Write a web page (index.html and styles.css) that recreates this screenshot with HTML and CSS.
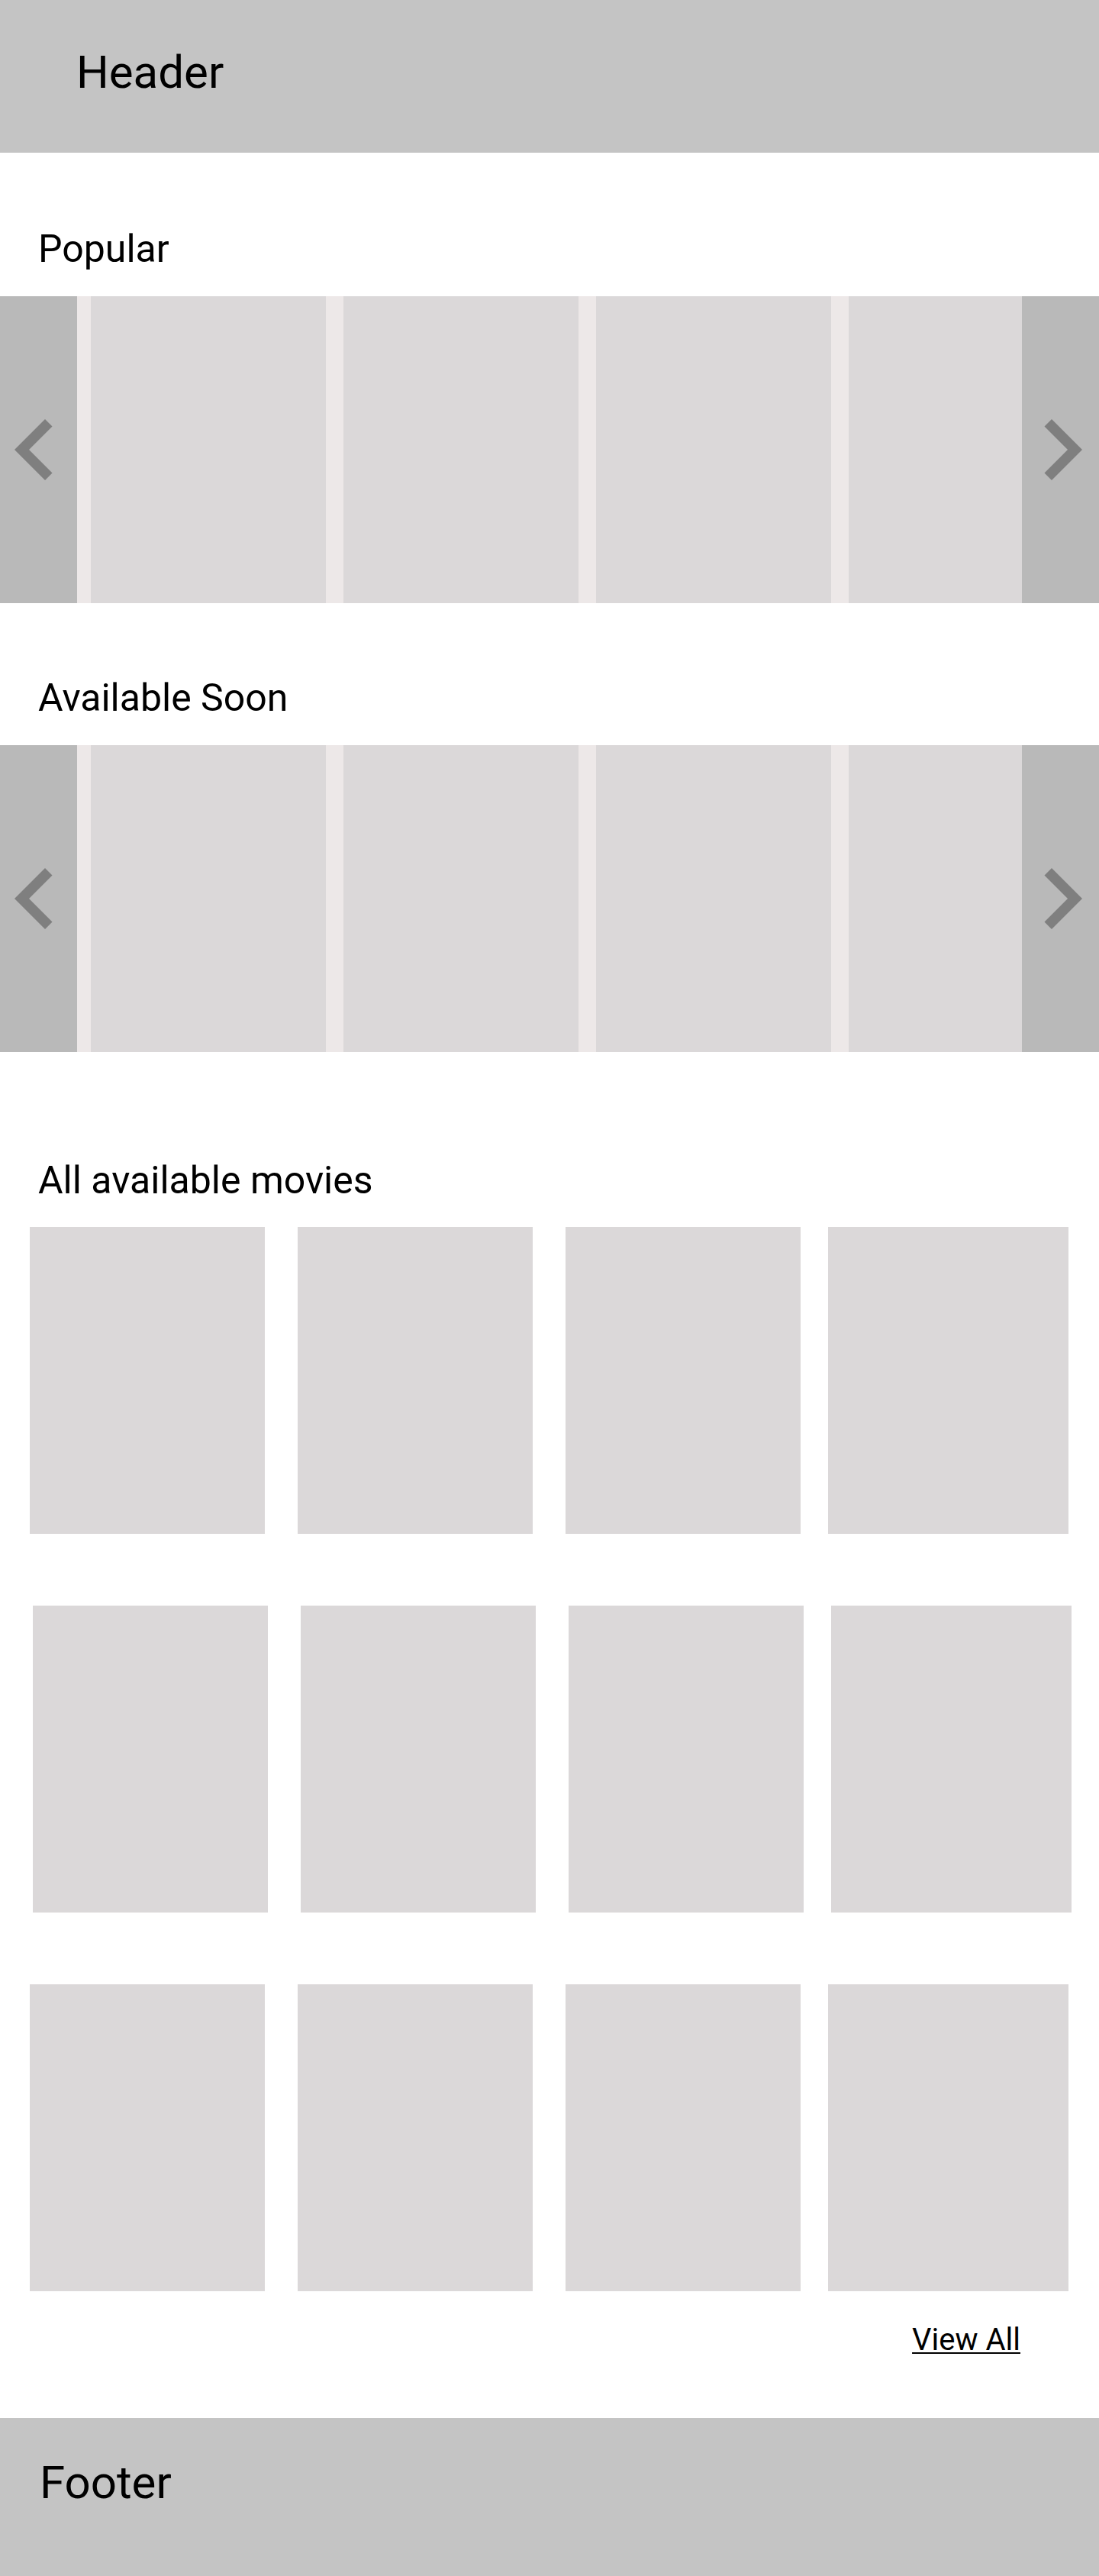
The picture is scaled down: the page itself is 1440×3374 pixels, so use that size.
FILE: index.html
```html
<!DOCTYPE html>
<html lang="en">
<head>
<meta charset="utf-8">
<title>Movies</title>
<link rel="stylesheet" href="styles.css">
</head>
<body>
<header class="site-header">
  <h1 class="site-title">Header</h1>
</header>

<main class="page">
  <section class="shelf shelf--first">
    <h2 class="section-title">Popular</h2>
    <div class="carousel">
      <button class="carousel-nav carousel-nav--prev" type="button" aria-label="Previous">
        <svg class="chevron" width="50" height="80" viewBox="0 0 50 80"><polygon points="40,0 49.5,9.4 19,40 49.5,70.6 40,80 0,40"/></svg>
      </button>
      <div class="carousel-track">
        <div class="poster"></div>
        <div class="poster"></div>
        <div class="poster"></div>
        <div class="poster"></div>
        <div class="poster"></div>
      </div>
      <button class="carousel-nav carousel-nav--next" type="button" aria-label="Next">
        <svg class="chevron" width="50" height="80" viewBox="0 0 50 80"><polygon points="10,0 50,40 10,80 0.5,70.6 31,40 0.5,9.4"/></svg>
      </button>
    </div>
  </section>

  <section class="shelf">
    <h2 class="section-title">Available Soon</h2>
    <div class="carousel">
      <button class="carousel-nav carousel-nav--prev" type="button" aria-label="Previous">
        <svg class="chevron" width="50" height="80" viewBox="0 0 50 80"><polygon points="40,0 49.5,9.4 19,40 49.5,70.6 40,80 0,40"/></svg>
      </button>
      <div class="carousel-track">
        <div class="poster"></div>
        <div class="poster"></div>
        <div class="poster"></div>
        <div class="poster"></div>
        <div class="poster"></div>
      </div>
      <button class="carousel-nav carousel-nav--next" type="button" aria-label="Next">
        <svg class="chevron" width="50" height="80" viewBox="0 0 50 80"><polygon points="10,0 50,40 10,80 0.5,70.6 31,40 0.5,9.4"/></svg>
      </button>
    </div>
  </section>

  <section class="catalog">
    <h2 class="section-title section-title--catalog">All available movies</h2>
    <div class="catalog-grid">
      <div class="catalog-row">
        <div class="tile"></div>
        <div class="tile"></div>
        <div class="tile"></div>
        <div class="tile tile--wide"></div>
      </div>
      <div class="catalog-row catalog-row--offset">
        <div class="tile"></div>
        <div class="tile"></div>
        <div class="tile"></div>
        <div class="tile tile--wide"></div>
      </div>
      <div class="catalog-row">
        <div class="tile"></div>
        <div class="tile"></div>
        <div class="tile"></div>
        <div class="tile tile--wide"></div>
      </div>
    </div>
    <div class="catalog-more">
      <a class="view-all" href="#">View All</a>
    </div>
  </section>
</main>

<footer class="site-footer">
  <p class="footer-title">Footer</p>
</footer>
</body>
</html>
```

FILE: styles.css
```css
* {
  box-sizing: border-box;
}

html, body {
  margin: 0;
  padding: 0;
}

body {
  font-family: Roboto, "Liberation Sans", Arial, sans-serif;
  color: #000;
  background: #fff;
}

/* Header */
.site-header {
  height: 200px;
  background: #c4c4c4;
  padding: 60px 0 0 100px;
}

.site-title {
  margin: 0;
  font-size: 60px;
  font-weight: 400;
  line-height: 70px;
}

/* Sections */
.shelf {
  padding-top: 95px;
}

.shelf--first {
  padding-top: 97px;
}

.section-title {
  margin: 0 0 33px 50px;
  font-size: 50px;
  font-weight: 400;
  line-height: 58px;
}

.section-title--catalog {
  margin-bottom: 32px;
}

/* Carousel */
.carousel {
  display: flex;
  height: 402px;
}

.carousel-nav {
  flex: 0 0 101px;
  display: flex;
  align-items: center;
  margin: 0;
  border: 0;
  background: #b9b9b9;
  cursor: pointer;
  appearance: none;
}

.carousel-nav--prev {
  justify-content: flex-start;
  padding: 0 0 0 19px;
}

.carousel-nav--next {
  justify-content: flex-end;
  padding: 0 22px 0 0;
}

.chevron {
  display: block;
  fill: #7f7f7f;
}

.carousel-track {
  flex: 1 1 auto;
  display: flex;
  gap: 23px;
  padding-left: 18px;
  overflow: hidden;
  background: #ede8e8;
}

.poster {
  flex: 0 0 308px;
  background: #dbd8d9;
}

/* Catalog grid */
.catalog {
  padding-top: 139px;
}

.catalog-grid {
  display: flex;
  flex-direction: column;
  gap: 94px;
}

.catalog-row {
  display: flex;
  gap: 43px;
  padding-left: 39px;
}

.catalog-row--offset {
  padding-left: 43px;
}

.tile {
  flex: 0 0 308px;
  height: 402px;
  background: #dbd8d9;
}

.tile--wide {
  flex-basis: 315px;
  margin-left: -7px;
}

.catalog-more {
  padding: 40px 103px 0 0;
  text-align: right;
}

.view-all {
  font-size: 40px;
  line-height: 47px;
  color: #000;
  text-decoration: underline;
  text-underline-offset: 3px;
  text-decoration-thickness: 2px;
}

/* Footer */
.site-footer {
  margin-top: 79px;
  height: 207px;
  background: #c4c4c4;
  padding: 50px 0 0 52px;
}

.footer-title {
  margin: 0;
  font-size: 60px;
  line-height: 70px;
}
```
